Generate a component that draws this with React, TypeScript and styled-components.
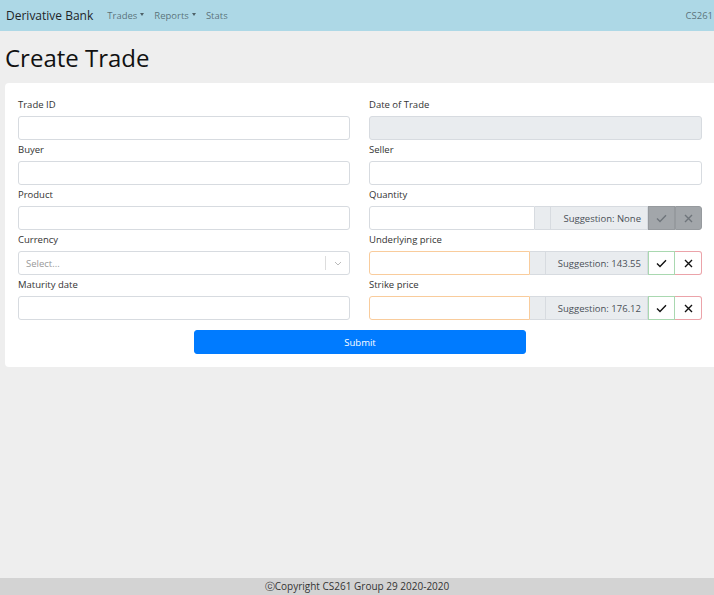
import React from 'react';
import styled, {createGlobalStyle} from "styled-components";

const GlobalStyle = createGlobalStyle`
  html, body {
    margin: 0;
    padding: 0;
    overflow: hidden;
    background: #eeeeee;
    font-family: "Open Sans", "Noto Sans", sans-serif;
    color: #212529;
  }
  * {
    box-sizing: border-box;
  }
`
const Page = styled.div`
  display: flex;
  flex-direction: column;
  width: 714px;
  height: 595px;
`
const Navbar = styled.nav`
  display: flex;
  align-items: center;
  height: 31px;
  padding: 0 1px 0 6px;

  background: #add8e6;
`
const Brand = styled.span`
  margin: 0 9px 0 0;

  font-size: 12px;
  color: #212529;
`
const NavLink = styled.span`
  display: flex;
  align-items: center;
  padding: 0 5px;

  font-size: 9.5px;
  color: rgba(0, 0, 0, .5);
`
const Caret = styled.span`
  display: inline-block;
  margin: 0 0 2px 3px;

  border-top: 3px solid rgba(0, 0, 0, .55);
  border-left: 2.5px solid transparent;
  border-right: 2.5px solid transparent;
`
const NavRight = styled.span`
  margin: 0 0 0 auto;

  font-size: 9.5px;
  color: rgba(0, 0, 0, .5);
`
const Main = styled.main`
  display: flex;
  flex-direction: column;
  flex: 1;
  padding: 0 0 0 5px;
`
const Title = styled.h1`
  margin: 0;
  padding: 7px 0 6px 0;

  font-size: 24px;
  font-weight: 400;
  line-height: 39px;
  color: #111;
`
const Card = styled.div`
  display: flex;
  flex-direction: column;
  gap: 10px;
  width: 709px;
  padding: 13px;

  background: #fff;
  border-radius: 4px 0 0 4px;
`
const Grid = styled.div`
  display: grid;
  grid-template-columns: 332px 333px;
  grid-auto-flow: column;
  grid-template-rows: repeat(5, auto);
  column-gap: 19px;
  row-gap: 1px;
`
const Field = styled.div`
  display: flex;
  flex-direction: column;
`
const Label = styled.label`
  height: 16px;
  margin: 0 0 4px 0;

  font-size: 9.5px;
  line-height: 17px;
  color: #333;
`
const Input = styled.div<{ disabled?: boolean, warn?: boolean }>`
  height: 24px;

  background: ${props => props.disabled ? '#e9ecef' : '#fff'};
  border: 1px solid ${props => props.warn ? '#f9cc9c' : '#d7dbe0'};
  border-radius: 3px;
`
const Group = styled.div`
  display: flex;
  height: 24px;

  ${Input} {
    flex: 1;
    border-radius: 3px 0 0 3px;
  }
`
const Addon = styled.div<{ width: number }>`
  display: flex;
  align-items: center;
  justify-content: flex-end;
  width: ${props => props.width}px;
  padding: 0 6px;

  font-size: 9.5px;
  color: #495057;
  white-space: nowrap;

  background: #e9ecef;
  border: 1px solid #d7dbe0;
  border-left: none;
`
const IconButton = styled.div<{ tone: 'muted' | 'ok' | 'no' }>`
  display: flex;
  align-items: center;
  justify-content: center;
  width: 27px;

  color: ${props => props.tone === 'muted' ? '#6f757b' : '#111'};
  background: ${props => props.tone === 'muted' ? '#a2a6aa' : '#fff'};
  border: 1px solid ${props => props.tone === 'muted' ? '#969a9e' : props.tone === 'ok' ? '#a9d8b0' : '#eba3a9'};
  border-left-width: ${props => props.tone === 'no' ? '0' : '1px'};

  &:last-child {
    border-radius: 0 3px 3px 0;
  }
`
const Select = styled.div`
  display: flex;
  align-items: center;
  height: 24px;
  padding: 0 0 0 7px;

  font-size: 9.5px;
  color: #999;

  background: #fff;
  border: 1px solid #d7dbe0;
  border-radius: 3px;

  span {
    flex: 1;
  }
`
const Indicator = styled.div`
  display: flex;
  align-items: center;
  justify-content: center;
  width: 24px;
  height: 14px;

  border-left: 1px solid #ddd;
`
const SubmitButton = styled.button`
  align-self: flex-start;
  width: 332px;
  height: 24px;
  margin: 0 0 0 176px;
  padding: 0;

  font-family: inherit;
  font-size: 9.5px;
  color: #fff;

  background: #007bff;
  border: 1px solid #007bff;
  border-radius: 3px;
`
const Footer = styled.footer`
  display: flex;
  align-items: center;
  justify-content: center;
  width: 714px;
  height: 17px;

  font-size: 10px;
  color: #333;

  background: #d3d3d3;
`

const Check = () => (
  <svg width="11" height="9" viewBox="0 0 11 9" fill="none">
    <path d="M1 4.5 L4 7.5 L10 1.2" stroke="currentColor" strokeWidth="1.4"/>
  </svg>
)
const Cross = () => (
  <svg width="9" height="9" viewBox="0 0 9 9" fill="none">
    <path d="M1 1 L8 8 M8 1 L1 8" stroke="currentColor" strokeWidth="1.4"/>
  </svg>
)
const Chevron = () => (
  <svg width="8" height="5" viewBox="0 0 8 5" fill="none">
    <path d="M1 1 L4 4 L7 1" stroke="#bbb" strokeWidth="1"/>
  </svg>
)

type SuggestProps = { label: string, suggestion: string, active: boolean }

function SuggestField({label, suggestion, active}: SuggestProps) {
  return (
    <Field>
      <Label>{label}</Label>
      <Group>
        <Input warn={active}/>
        <Addon width={16}/>
        <Addon width={active ? 102 : 97}>{suggestion}</Addon>
        <IconButton tone={active ? 'ok' : 'muted'}><Check/></IconButton>
        <IconButton tone={active ? 'no' : 'muted'}><Cross/></IconButton>
      </Group>
    </Field>
  )
}

function App() {
  return (
    <Page>
      <GlobalStyle/>
      <Navbar>
        <Brand>Derivative Bank</Brand>
        <NavLink>Trades<Caret/></NavLink>
        <NavLink>Reports<Caret/></NavLink>
        <NavLink>Stats</NavLink>
        <NavRight>CS261</NavRight>
      </Navbar>
      <Main>
        <Title>Create Trade</Title>
        <Card>
          <Grid>
            <Field><Label>Trade ID</Label><Input/></Field>
            <Field><Label>Buyer</Label><Input/></Field>
            <Field><Label>Product</Label><Input/></Field>
            <Field>
              <Label>Currency</Label>
              <Select><span>Select...</span><Indicator><Chevron/></Indicator></Select>
            </Field>
            <Field><Label>Maturity date</Label><Input/></Field>
            <Field><Label>Date of Trade</Label><Input disabled/></Field>
            <Field><Label>Seller</Label><Input/></Field>
            <SuggestField label="Quantity" suggestion="Suggestion: None" active={false}/>
            <SuggestField label="Underlying price" suggestion="Suggestion: 143.55" active/>
            <SuggestField label="Strike price" suggestion="Suggestion: 176.12" active/>
          </Grid>
          <SubmitButton>Submit</SubmitButton>
        </Card>
      </Main>
      <Footer>ⓒCopyright CS261 Group 29 2020-2020</Footer>
    </Page>
  );
}

export default App;
